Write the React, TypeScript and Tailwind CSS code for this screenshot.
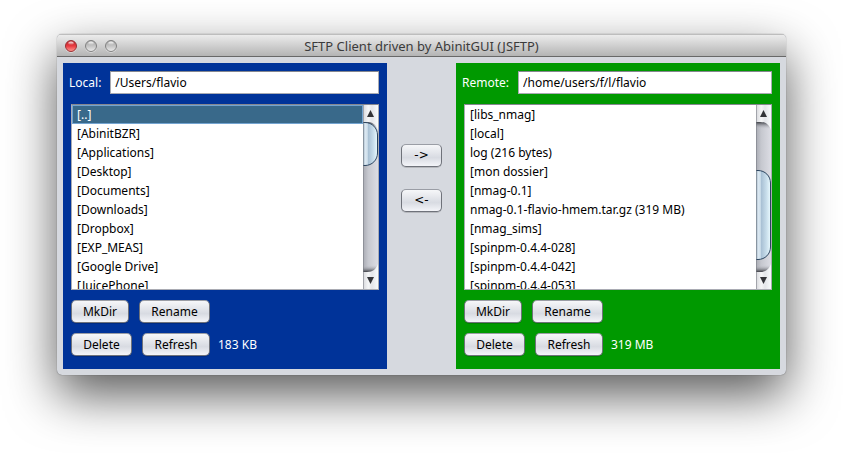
import React from "react";

const localFiles = [
  "[..]",
  "[AbinitBZR]",
  "[Applications]",
  "[Desktop]",
  "[Documents]",
  "[Downloads]",
  "[Dropbox]",
  "[EXP_MEAS]",
  "[Google Drive]",
  "[JuicePhone]",
];

const remoteFiles = [
  "[libs_nmag]",
  "[local]",
  "log (216 bytes)",
  "[mon dossier]",
  "[nmag-0.1]",
  "nmag-0.1-flavio-hmem.tar.gz (319 MB)",
  "[nmag_sims]",
  "[spinpm-0.4.4-028]",
  "[spinpm-0.4.4-042]",
  "[spinpm-0.4.4-053]",
];

function NimbusButton({ children, className = "" }: { children: React.ReactNode; className?: string }) {
  return (
    <button
      type="button"
      className={`flex h-[23px] items-center justify-center whitespace-nowrap rounded-[5px] border border-[#6f727a] border-t-[#9a9da5] bg-linear-to-b from-[#f6f7f9] via-[#d8dbe2] via-60% to-[#f4f5f9] text-black shadow-[0_1px_0_rgba(0,0,0,0.15)] ${className}`}
    >
      {children}
    </button>
  );
}

function ScrollBar({ id, top, bottom }: { id: string; top: number; bottom: number }) {
  return (
    <svg width="15" height="184" viewBox="0 0 15 184" className="block shrink-0" aria-hidden="true">
      <defs>
        <linearGradient id={`${id}-track`} x1="0" x2="1" y1="0" y2="0">
          <stop offset="0" stopColor="#a9abb3" />
          <stop offset="0.35" stopColor="#c6c8cf" />
          <stop offset="1" stopColor="#dcdde4" />
        </linearGradient>
        <linearGradient id={`${id}-cap`} x1="0" x2="1" y1="0" y2="0">
          <stop offset="0" stopColor="#d6d7db" />
          <stop offset="0.35" stopColor="#f5f6f7" />
          <stop offset="0.6" stopColor="#e4e6ea" />
          <stop offset="1" stopColor="#f8fbfc" />
        </linearGradient>
        <linearGradient id={`${id}-thumb`} x1="0" x2="1" y1="0" y2="0">
          <stop offset="0" stopColor="#8fa6ba" />
          <stop offset="0.15" stopColor="#dce8f1" />
          <stop offset="0.3" stopColor="#cfe0ec" />
          <stop offset="0.36" stopColor="#a8c0d4" />
          <stop offset="0.7" stopColor="#c6dcea" />
          <stop offset="1" stopColor="#e9faff" />
        </linearGradient>
        <linearGradient id={`${id}-upper`} x1="0" x2="0" y1="0" y2="1">
          <stop offset="0" stopColor="#3e4046" />
          <stop offset="0.5" stopColor="#8e9097" stopOpacity="0.6" />
          <stop offset="1" stopColor="#c6c8cf" stopOpacity="0" />
        </linearGradient>
        <linearGradient id={`${id}-lower`} x1="0" x2="0" y1="1" y2="0">
          <stop offset="0" stopColor="#3e4046" />
          <stop offset="0.5" stopColor="#8e9097" stopOpacity="0.6" />
          <stop offset="1" stopColor="#c6c8cf" stopOpacity="0" />
        </linearGradient>
      </defs>
      <rect width="15" height="184" fill={`url(#${id}-track)`} />
      <rect y="17" width="15" height="7" fill={`url(#${id}-upper)`} />
      <rect y="160" width="15" height="7" fill={`url(#${id}-lower)`} />
      <path d="M0 0H15V25C13 20 10 17 4 17H0Z" fill={`url(#${id}-cap)`} />
      <path d="M0 184H15V159C13 164 10 167 4 167H0Z" fill={`url(#${id}-cap)`} />
      <path
        d={`M0 ${top + 0.5}H2C9 ${top + 0.5} 14.5 ${top + 6} 14.5 ${top + 13}V${bottom - 13}C14.5 ${bottom - 6} 9 ${bottom - 0.5} 2 ${bottom - 0.5}H0`}
        fill={`url(#${id}-thumb)`}
        stroke="#2c4560"
        strokeWidth="1"
      />
      <path d="M0.5 0V184" stroke="#777a82" strokeOpacity="0.55" />
      <path d="M7.5 5L11 12H4Z" fill="#333438" />
      <path d="M7.5 179L11 172H4Z" fill="#333438" />
    </svg>
  );
}

type PaneProps = {
  id: string;
  label: string;
  path: string;
  files: string[];
  selected?: number;
  size: string;
  thumb: [number, number];
  color: string;
};

function Pane({ id, label, path, files, selected, size, thumb, color }: PaneProps) {
  return (
    <section className={`flex min-w-0 flex-1 flex-col pt-2 pr-2 pb-[13px] ${color}`}>
      <div className="flex items-center gap-[9px] pl-1.5">
        <label htmlFor={id} className="whitespace-nowrap text-white">
          {label}
        </label>
        <input
          id={id}
          defaultValue={path}
          className="h-[23px] min-w-0 flex-1 border border-[#a9abb3] border-t-[#85878f] bg-white px-1 text-black outline-none"
        />
      </div>
      <div className="mt-2.5 ml-2 flex h-[186px] border border-[#a9abb3] border-t-[#85878f] bg-white">
        <ul role="listbox" aria-label={`${label} files`} className="min-w-0 flex-1 overflow-hidden">
          {files.map((file, i) => (
            <li
              key={file}
              role="option"
              aria-selected={i === selected}
              className={`h-[19px] truncate border px-1 leading-[17px] ${
                i === selected ? "border-[#73a4d1] bg-[#39698a] text-white" : "border-transparent text-black"
              }`}
            >
              {file}
            </li>
          ))}
        </ul>
        <ScrollBar id={`${id}-bar`} top={thumb[0]} bottom={thumb[1]} />
      </div>
      <div className="mt-2.5 ml-2 flex gap-2.5">
        <NimbusButton className="w-[58px]">MkDir</NimbusButton>
        <NimbusButton className="w-[71px]">Rename</NimbusButton>
      </div>
      <div className="mt-2.5 ml-2 flex items-center gap-2">
        <div className="flex gap-2.5">
          <NimbusButton className="w-[61px]">Delete</NimbusButton>
          <NimbusButton className="w-[68px]">Refresh</NimbusButton>
        </div>
        <span className="text-white">{size}</span>
      </div>
    </section>
  );
}

function Light({ id, close = false }: { id: string; close?: boolean }) {
  return (
    <button type="button" aria-label={id} className="block size-3">
      <svg viewBox="0 0 12 12" className="block size-3 overflow-visible">
        <defs>
          <linearGradient id={`${id}-fill`} x1="0" x2="0" y1="0" y2="1">
            <stop offset="0" stopColor={close ? "#b8262c" : "#a2a2a2"} />
            <stop offset="0.5" stopColor={close ? "#ea3a40" : "#c4c4c4"} />
            <stop offset="1" stopColor={close ? "#ff9c94" : "#ededed"} />
          </linearGradient>
          <linearGradient id={`${id}-shine`} x1="0" x2="0" y1="0" y2="1">
            <stop offset="0" stopColor="#fff" stopOpacity="0.9" />
            <stop offset="1" stopColor="#fff" stopOpacity="0.1" />
          </linearGradient>
        </defs>
        <circle cx="6" cy="6.8" r="6" fill="#fff" fillOpacity="0.5" />
        <circle cx="6" cy="6" r="5.5" fill={`url(#${id}-fill)`} stroke={close ? "#963034" : "#808080"} />
        <ellipse cx="6" cy="3.2" rx="2.8" ry="1.6" fill={`url(#${id}-shine)`} />
      </svg>
    </button>
  );
}

export default function App() {
  return (
    <main className="bg-white px-[57px] pt-[34px] pb-[78px] font-['Noto_Sans','Lucida_Grande',sans-serif] text-[12px] leading-[17px]">
      <div className="overflow-hidden rounded-[5px] bg-[#d6d9df] shadow-[0_0_1px_rgba(0,0,0,0.6),0_20px_50px_rgba(0,0,0,0.65)]">
        <header className="grid h-[23px] grid-cols-[1fr_auto_1fr] items-center border-t border-b border-t-[#bdbdbd] border-b-[#686868] bg-linear-to-b from-[#ececec] to-[#b4b4b4]">
          <div className="flex gap-2 pl-2">
            <Light id="close" close />
            <Light id="minimize" />
            <Light id="zoom" />
          </div>
          <h1 className="pt-0.5 text-[13px] text-[#3b3b3b]">SFTP Client driven by AbinitGUI (JSFTP)</h1>
        </header>
        <div className="flex p-1.5">
          <Pane
            id="local"
            label="Local:"
            path="/Users/flavio"
            files={localFiles}
            selected={0}
            size="183 KB"
            thumb={[17, 61]}
            color="bg-[#003399]"
          />
          <div className="flex w-[69px] shrink-0 flex-col items-center gap-[22px] pt-[81px] font-['DejaVu_Sans',sans-serif]">
            <NimbusButton className="w-[41px]">-&gt;</NimbusButton>
            <NimbusButton className="w-[41px]">&lt;-</NimbusButton>
          </div>
          <Pane
            id="remote"
            label="Remote:"
            path="/home/users/f/l/flavio"
            files={remoteFiles}
            size="319 MB"
            thumb={[65, 155]}
            color="bg-[#009900]"
          />
        </div>
      </div>
    </main>
  );
}
